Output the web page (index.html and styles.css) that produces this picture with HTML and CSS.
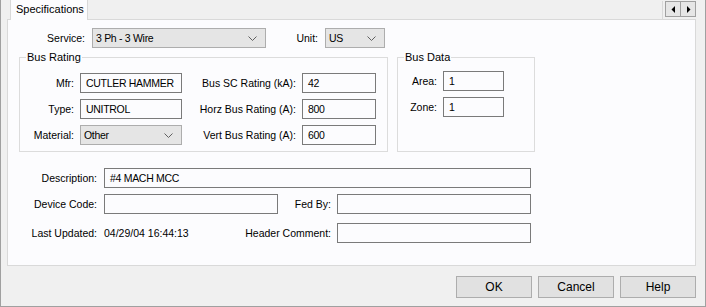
FILE: index.html
```html
<!DOCTYPE html>
<html lang="en">
  <head>
    <meta charset="UTF-8" />
    <title>Specifications</title>
    <link rel="stylesheet" href="styles.css">
  </head>
  <body>
    <div class="window">
      <div class="tabstrip">
        <div class="tab">Specifications</div>
        <div class="tab-fill"></div>
        <div class="tab-sep"></div>
        <div class="scroll-btns">
          <span class="scroll-btn">
            <svg width="5" height="7" viewBox="0 0 5 7"><polygon points="4,0 4,7 0.5,3.5" fill="#000"/></svg>
          </span>
          <span class="scroll-btn">
            <svg width="5" height="7" viewBox="0 0 5 7"><polygon points="1,0 1,7 4.5,3.5" fill="#000"/></svg>
          </span>
        </div>
      </div>

      <div class="panel">
        <div class="row-service">
          <label class="lbl lbl-service">Service:</label>
          <div class="select sel-service">
            <span>3 Ph - 3 Wire</span>
            <svg class="chev" width="9" height="5" viewBox="0 0 9 5"><polyline points="0.5,0.5 4.5,4.5 8.5,0.5" fill="none" stroke="#606060"/></svg>
          </div>
          <label class="lbl lbl-unit">Unit:</label>
          <div class="select sel-unit">
            <span>US</span>
            <svg class="chev" width="9" height="5" viewBox="0 0 9 5"><polyline points="0.5,0.5 4.5,4.5 8.5,0.5" fill="none" stroke="#606060"/></svg>
          </div>
        </div>

        <div class="groups">
          <fieldset class="group bus-rating">
            <legend>Bus Rating</legend>
            <div class="rating-grid">
              <label class="lbl">Mfr:</label>
              <div class="field w-mfr">CUTLER HAMMER</div>
              <label class="lbl">Bus SC Rating (kA):</label>
              <div class="field w-num">42</div>

              <label class="lbl">Type:</label>
              <div class="field w-mfr">UNITROL</div>
              <label class="lbl">Horz Bus Rating (A):</label>
              <div class="field w-num">800</div>

              <label class="lbl">Material:</label>
              <div class="select w-mfr">
                <span>Other</span>
                <svg class="chev" width="9" height="5" viewBox="0 0 9 5"><polyline points="0.5,0.5 4.5,4.5 8.5,0.5" fill="none" stroke="#606060"/></svg>
              </div>
              <label class="lbl">Vert Bus Rating (A):</label>
              <div class="field w-num">600</div>
            </div>
          </fieldset>

          <fieldset class="group bus-data">
            <legend>Bus Data</legend>
            <div class="data-grid">
              <label class="lbl">Area:</label>
              <div class="field">1</div>
              <label class="lbl">Zone:</label>
              <div class="field">1</div>
            </div>
          </fieldset>
        </div>

        <div class="details">
          <div class="drow">
            <label class="lbl dlabel">Description:</label>
            <div class="field w-desc">#4 MACH MCC</div>
          </div>
          <div class="drow drow-2">
            <label class="lbl dlabel">Device Code:</label>
            <div class="field w-code"></div>
            <label class="lbl rlabel">Fed By:</label>
            <div class="field w-right"></div>
          </div>
          <div class="drow drow-3">
            <label class="lbl dlabel">Last Updated:</label>
            <span class="value">04/29/04 16:44:13</span>
            <label class="lbl rlabel">Header Comment:</label>
            <div class="field w-right"></div>
          </div>
        </div>
      </div>

      <div class="actions">
        <button>OK</button>
        <button>Cancel</button>
        <button>Help</button>
      </div>
    </div>
  </body>
</html>
```

FILE: styles.css
```css
html, body {
  margin: 0;
  padding: 0;
}

body {
  font-family: "Liberation Sans", Arial, sans-serif;
  font-size: 10.5px;
  color: #000;
  background-color: #f0f0f0;
}

.window {
  width: 706px;
  height: 307px;
  box-sizing: border-box;
  background-color: #f0f0f0;
  border: 1px solid #a0a0a0;
  border-top: none;
  padding: 0 9px 0 6px;
  display: flex;
  flex-direction: column;
}

/* tab strip */

.tabstrip {
  height: 19px;
  display: flex;
  align-items: flex-start;
}

.tab {
  margin-left: 3px;
  width: 78px;
  height: 20px;
  box-sizing: border-box;
  background-color: #fcfcfe;
  border: 1px solid #d9d9d9;
  border-top: none;
  border-bottom: none;
  padding: 3px 0 0 5px;
  font-size: 11px;
  position: relative;
  z-index: 1;
}

.tab-fill {
  flex: 1;
}

.tab-sep {
  width: 1px;
  height: 18px;
  margin-top: 1px;
  background-color: #d9d9d9;
  margin-right: 2px;
}

.scroll-btns {
  display: flex;
  margin-top: 1px;
}

.scroll-btn {
  width: 16px;
  height: 16px;
  box-sizing: border-box;
  border: 1px solid #a0a0a0;
  background-color: #e6e6e6;
  display: flex;
  align-items: center;
  justify-content: center;
}

.scroll-btn + .scroll-btn {
  border-left: none;
  width: 15px;
}

/* tab page */

.panel {
  height: 247px;
  box-sizing: border-box;
  background-color: #fcfcfe;
  border: 1px solid #d9d9d9;
  padding-top: 8px;
}

.lbl {
  display: block;
  text-align: right;
  white-space: nowrap;
}

.field,
.select {
  height: 20px;
  box-sizing: border-box;
  display: flex;
  align-items: center;
  white-space: nowrap;
  overflow: hidden;
  letter-spacing: -0.3px;
}

.field {
  border: 1px solid #7a7a7a;
  background-color: #fcfcfe;
  padding-left: 5px;
}

.select {
  border: 1px solid #adadad;
  background-color: #e5e5e5;
  padding: 0 8px 0 3px;
  justify-content: space-between;
}

.row-service {
  display: flex;
  align-items: center;
}

.lbl-service {
  width: 77px;
  margin-right: 7px;
}

.sel-service {
  width: 174px;
}

.lbl-unit {
  width: 52px;
  margin-right: 7px;
}

.sel-unit {
  width: 60px;
}

/* group boxes */

.groups {
  display: flex;
  margin-top: 2px;
  padding-left: 11px;
  gap: 9px;
}

.group {
  margin: 0;
  padding: 0;
  border: 1px solid #dcdcdc;
  min-width: 0;
  box-sizing: border-box;
}

.group legend {
  margin-left: 6px;
  padding: 0 1px;
  line-height: 14px;
  font-size: 11px;
}

.bus-rating {
  width: 369px;
  height: 102px;
}

.bus-data {
  width: 138px;
  height: 102px;
}

.rating-grid {
  display: grid;
  grid-template-columns: 54px 102px 108px 74px;
  column-gap: 6px;
  row-gap: 6px;
  align-items: center;
  padding-top: 9px;
}

.w-mfr {
  width: 102px;
}

.w-num {
  width: 74px;
}

.data-grid {
  display: grid;
  grid-template-columns: 39px 61px;
  column-gap: 6px;
  row-gap: 6px;
  align-items: center;
  padding-top: 7px;
}

/* bottom fields */

.details {
  margin-top: 16px;
  width: 523px;
}

.drow {
  display: flex;
  align-items: center;
}

.drow-2 {
  margin-top: 6px;
}

.drow-3 {
  margin-top: 9px;
}

.dlabel {
  width: 89px;
  margin-right: 7px;
}

.w-desc {
  width: 427px;
}

.w-code {
  width: 174px;
}

.rlabel {
  margin-left: auto;
  margin-right: 6px;
}

.w-right {
  width: 194px;
}

/* dialog buttons */

.actions {
  display: flex;
  justify-content: flex-end;
  gap: 6px;
  margin-top: 10px;
}

.actions button {
  width: 76px;
  height: 22px;
  background-color: #e1e1e1;
  border: 1px solid #adadad;
  border-radius: 0;
  font-family: "Liberation Sans", Arial, sans-serif;
  font-size: 12px;
  color: #000;
  padding: 0;
}
```
